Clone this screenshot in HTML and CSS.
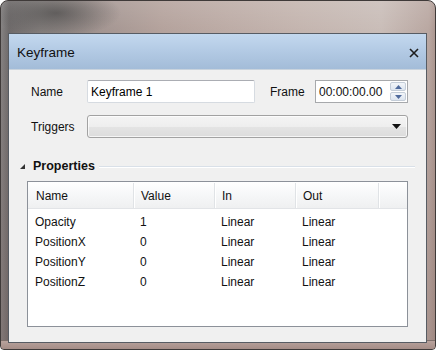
FILE: index.html
```html
<!DOCTYPE html>
<html>
<head>
<meta charset="utf-8">
<link rel="stylesheet" href="styles.css">
</head>
<body>
<div class="frame">
  <div class="glass-blob"></div>
  <div class="dialog">
    <div class="titlebar">
      <span class="title">Keyframe</span>
      <svg class="close" width="10" height="10" viewBox="0 0 10 10"><path d="M1 1 L9 9 M9 1 L1 9" stroke="#1e1e1e" stroke-width="1.6" fill="none"/></svg>
    </div>
    <div class="content">
      <div class="row row1">
        <span class="label">Name</span>
        <div class="textbox name-box">Keyframe 1</div>
        <span class="label frame-label">Frame</span>
        <div class="textbox frame-box">
          <span class="time">00:00:00.00</span>
          <div class="spinner">
            <div class="spin up"><svg width="7" height="4" viewBox="0 0 7 4"><polygon points="0,4 7,4 3.5,0" fill="#4f6a9c"/></svg></div>
            <div class="spin down"><svg width="7" height="4" viewBox="0 0 7 4"><polygon points="0,0 7,0 3.5,4" fill="#4f6a9c"/></svg></div>
          </div>
        </div>
      </div>
      <div class="row row2">
        <span class="label">Triggers</span>
        <div class="combo">
          <svg class="combo-arrow" width="9" height="5" viewBox="0 0 9 5"><polygon points="0,0 9,0 4.5,5" fill="#111"/></svg>
        </div>
      </div>
      <div class="group-header">
        <svg class="expander" width="5" height="5" viewBox="0 0 5 5"><polygon points="5,0 5,5 0,5" fill="#333"/></svg>
        <span class="group-title">Properties</span>
        <div class="group-line"></div>
      </div>
      <div class="table">
        <div class="thead">
          <div class="th c1">Name</div>
          <div class="th c2">Value</div>
          <div class="th c3">In</div>
          <div class="th c4">Out</div>
          <div class="th c5"></div>
        </div>
        <div class="tbody">
          <div class="tr"><div class="td c1">Opacity</div><div class="td c2">1</div><div class="td c3">Linear</div><div class="td c4">Linear</div></div>
          <div class="tr"><div class="td c1">PositionX</div><div class="td c2">0</div><div class="td c3">Linear</div><div class="td c4">Linear</div></div>
          <div class="tr"><div class="td c1">PositionY</div><div class="td c2">0</div><div class="td c3">Linear</div><div class="td c4">Linear</div></div>
          <div class="tr"><div class="td c1">PositionZ</div><div class="td c2">0</div><div class="td c3">Linear</div><div class="td c4">Linear</div></div>
        </div>
      </div>
    </div>
  </div>
</div>
</body>
</html>
```
FILE: styles.css
```css
* { box-sizing: border-box; }
html, body { margin: 0; padding: 0; }
body {
  width: 436px;
  height: 350px;
  background: #ffffff;
  font-family: "Liberation Sans", Arial, sans-serif;
  font-size: 12px;
  color: #000;
  overflow: hidden;
}
.frame {
  position: relative;
  width: 436px;
  height: 350px;
  border: 1px solid #3f3a39;
  border-radius: 8px 8px 4px 4px;
  background:
    linear-gradient(to bottom, rgba(255,255,255,0.12) 0px, rgba(255,255,255,0) 30px),
    linear-gradient(to bottom, rgba(0,0,0,0) 30px, rgba(120,90,85,0.25) 340px),
    linear-gradient(to right, #858282 0px, #6e6a6a 8px, #8a8482 40px, #a39591 100px, #b4a29c 160px, #bdaca6 230px, #c4b5af 300px, #c9bdb8 380px, #b9a7a1 428px, #a8928b 436px);
  padding: 32px 8px 7px 7px;
  overflow: hidden;
}
.glass-blob {
  position: absolute;
  left: 0;
  top: 0;
  width: 140px;
  height: 40px;
  background: radial-gradient(ellipse 65px 24px at 55px 12px, rgba(60,60,60,0.6), rgba(60,60,60,0));
}
.frame::after {
  content: "";
  position: absolute;
  left: 0; right: 0; bottom: 0;
  height: 8px;
  border-top: 1px solid #7e6f6b;
  background: linear-gradient(to bottom, #b8a29c, #a58d87);
}
.dialog {
  position: relative;
  z-index: 1;
  height: 310px;
  border: 1px solid #575c63;
  display: flex;
  flex-direction: column;
  background: #f0f0f0;
}
.titlebar {
  height: 35px;
  flex: none;
  background: linear-gradient(to bottom, #c3d8ee 0%, #b4cbe5 45%, #a3bcd8 100%);
  display: flex;
  align-items: center;
  padding: 0 7px 0 8px;
}
.title {
  font-size: 13.5px;
  color: #111;
  flex: 1;
  padding-top: 1px;
}
.close { display: block; margin-top: 2px; }
.content {
  flex: 1;
  padding: 10px 0 0 22px;
  border-top: 1px solid #c9d3dd;
  background: #f0f0f0;
}
.row { display: flex; align-items: center; height: 23px; }
.row2 { margin-top: 12px; }
.label { width: 56px; flex: none; color: #111; }
.textbox {
  height: 23px;
  background: #fff;
  border: 1px solid #d6dbe1;
  border-top-color: #abadb3;
  border-radius: 2px;
  display: flex;
  align-items: center;
  padding-left: 3px;
}
.name-box { width: 168px; }
.frame-label { width: 45px; margin-left: 15px; }
.frame-box {
  width: 93px;
  border: 1px solid #a7a9ac;
  border-radius: 0;
  padding-left: 3px;
  padding-right: 1px;
}
.time { flex: 1; color: #111; }
.spinner {
  width: 16px;
  height: 19px;
  display: flex;
  flex-direction: column;
  gap: 1px;
}
.spin {
  flex: 1;
  border: 1px solid #c4cdd8;
  border-radius: 2px;
  background: linear-gradient(to bottom, #f2f5f9, #dde5ef);
  display: flex;
  align-items: center;
  justify-content: center;
}
.spin svg { display: block; }
.combo {
  width: 321px;
  height: 23px;
  border: 1px solid #a2a2a2;
  border-radius: 3px;
  background: linear-gradient(to bottom, #f4f4f4 0%, #eeeeee 50%, #e4e4e4 51%, #dcdcdc 100%);
  box-shadow: inset 0 0 0 1px rgba(255,255,255,0.7);
  display: flex;
  align-items: center;
  justify-content: flex-end;
  padding-right: 6px;
}
.combo-arrow { display: block; }
.group-header {
  display: flex;
  align-items: center;
  margin-top: 21px;
  margin-left: -11px;
  height: 14px;
}
.expander { display: block; margin-right: 8px; margin-top: 1px; }
.group-title { font-weight: bold; font-size: 12.5px; color: #111; }
.group-line {
  width: 316px;
  margin-left: 4px;
  height: 1px;
  background: #d9e0e8;
  border-bottom: 1px solid #fff;
  box-sizing: content-box;
  margin-top: 2px;
}
.table {
  margin-top: 8px;
  margin-left: -4px;
  width: 381px;
  height: 146px;
  border: 1px solid #8c9199;
  background: #fff;
}
.thead {
  display: flex;
  height: 27px;
  padding-top: 1px;
  background: linear-gradient(to bottom, #ffffff 0%, #f6f7f8 50%, #eff0f1 100%);
  border-bottom: 1px solid #e2e4e7;
}
.th {
  display: flex;
  align-items: center;
  padding-left: 7px;
  border-right: 1px solid #e0e3e6;
  box-shadow: 1px 0 0 #fff;
  color: #111;
}
.c1 { width: 106px; }
.c2 { width: 81px; }
.c3 { width: 81px; }
.c4 { width: 83px; }
.c5 { flex: 1; border-right: none; box-shadow: none; }
.th.c1 { padding-left: 8px; }
.tbody { padding-top: 3px; }
.tr { display: flex; height: 20px; align-items: center; }
.td { padding-left: 6px; color: #111; }
.td.c1 { padding-left: 7px; }
```
